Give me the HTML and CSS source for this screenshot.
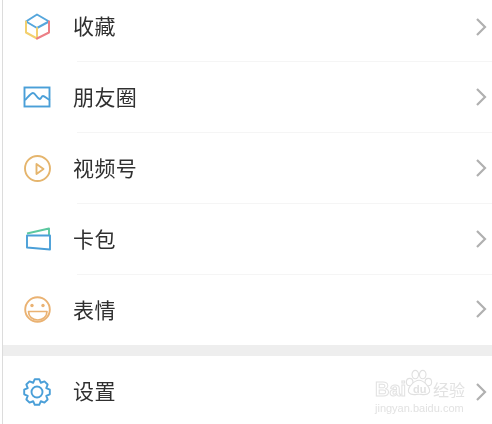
FILE: index.html
```html
<!DOCTYPE html>
<html lang="zh">
<head>
<meta charset="utf-8">
<title>发现</title>
<link rel="stylesheet" href="styles.css">
</head>
<body>
<main class="page">
  <section class="group">
    <div class="row row-first">
      <svg class="icon" viewBox="0 0 28 28" fill="none" stroke-width="2" stroke-linejoin="round" stroke-linecap="round">
        <path d="M14 1.500 26 8.500 14 15 3 8.500Z" stroke="#55a6dc"/>
        <path d="M3 8.500V19.500L14 25.500V15" stroke="#f3d06e"/>
        <path d="M26 8.500V19.500L14 25.500" stroke="#ec7f86"/>
      </svg>
      <span class="label">收藏</span>
      <svg class="chev" viewBox="0 0 12 20" fill="none"><path d="M2 2 10 10 2 18"/></svg>
    </div>
    <div class="row">
      <svg class="icon" viewBox="0 0 28 28" fill="none" stroke="#4a9fd8" stroke-width="1.900">
        <rect x="1.500" y="4.500" width="25" height="19"/>
        <path d="M2 17C5 14 8 10 10 10 12.500 10 14 16 17 16 18 16 18.500 13 20 13 22 13 24 16 27 17"/>
      </svg>
      <span class="label">朋友圈</span>
      <svg class="chev" viewBox="0 0 12 20" fill="none"><path d="M2 2 10 10 2 18"/></svg>
    </div>
    <div class="row">
      <svg class="icon" viewBox="0 0 28 28" fill="none" stroke="#e5b56d" stroke-width="1.900" stroke-linejoin="round">
        <circle cx="14.500" cy="14.500" r="12.500"/>
        <path d="M13.500 10 20.500 15 13.500 20Z"/>
      </svg>
      <span class="label">视频号</span>
      <svg class="chev" viewBox="0 0 12 20" fill="none"><path d="M2 2 10 10 2 18"/></svg>
    </div>
    <div class="row">
      <svg class="icon" viewBox="0 0 28 28" fill="none" stroke-width="1.900" stroke-linejoin="round">
        <path d="M4 8.500 26 3.500V10.500" stroke="#5cc8a0"/>
        <path d="M4 10.500H27V24.500L4 22.500Z" stroke="#4a9fd8"/>
      </svg>
      <span class="label">卡包</span>
      <svg class="chev" viewBox="0 0 12 20" fill="none"><path d="M2 2 10 10 2 18"/></svg>
    </div>
    <div class="row row-last">
      <svg class="icon" viewBox="0 0 28 28" fill="none" stroke="#eab272" stroke-width="1.900" stroke-linejoin="round">
        <circle cx="14.500" cy="14.500" r="12.300"/>
        <path d="M5.500 16.500H24C24 21.500 20 25 14.800 25 9.500 25 5.500 21.500 5.500 16.500Z" stroke-width="1.700"/>
        <circle class="eye" cx="9" cy="10.500" r="1.700"/>
        <circle class="eye" cx="20" cy="10.500" r="1.700"/>
      </svg>
      <span class="label">表情</span>
      <svg class="chev" viewBox="0 0 12 20" fill="none"><path d="M2 2 10 10 2 18"/></svg>
    </div>
  </section>
  <div class="gap"></div>
  <section class="group">
    <div class="row row-settings">
      <svg class="icon" viewBox="0 0 28 28" fill="none" stroke="#4a9fd8" stroke-width="1.900" stroke-linejoin="round">
        <path d="M11.740 1.200H16.260L17.830 4.760 21.460 3.350 24.650 6.540 23.240 10.170 26.800 11.740V16.260L23.240 17.830 24.650 21.460 21.460 24.650 17.830 23.240 16.260 26.800H11.740L10.170 23.240 6.540 24.650 3.350 21.460 4.760 17.830 1.200 16.260V11.740L4.760 10.170 3.350 6.540 6.540 3.350 10.170 4.760Z"/>
        <circle cx="14" cy="14" r="5.500"/>
      </svg>
      <span class="label">设置</span>
      <svg class="chev" viewBox="0 0 12 20" fill="none"><path d="M2 2 10 10 2 18"/></svg>
    </div>
  </section>
  <div class="mark">
    <div class="mark-top">
      <span class="mark-bai">Bai</span>
      <span class="mark-pawbox">
        <svg class="mark-paw" viewBox="0 0 30 30" fill="#fff" stroke="#e0e0e0" stroke-width="1.200">
          <ellipse cx="5" cy="14" rx="3.500" ry="4"/>
          <ellipse cx="11" cy="6" rx="3.500" ry="4.500"/>
          <ellipse cx="19" cy="6" rx="3.500" ry="4.500"/>
          <ellipse cx="25" cy="14" rx="3.500" ry="4"/>
          <path d="M15 12C20 12 28 20 26 25 24 29 18 27 15 27 12 27 6 29 4 25 2 20 10 12 15 12Z"/>
        </svg>
        <span class="mark-du">du</span>
      </span>
      <span class="mark-cn">经验</span>
    </div>
    <div class="mark-url">jingyan.baidu.com</div>
  </div>
</main>
</body>
</html>
```
FILE: styles.css
```css
* { box-sizing: border-box; }
html, body { margin: 0; padding: 0; background: #fff; }
.page {
  position: relative;
  width: 490px;
  height: 424px;
  margin-left: 2px;
  overflow: hidden;
  background: #fff;
  border-left: 1px solid #dcdcdc;
  font-family: "Noto Sans CJK SC", "Noto Sans", sans-serif;
}
.group { display: flex; flex-direction: column; }
.row {
  position: relative;
  display: flex;
  align-items: center;
  height: 71px;
  padding: 0 5px 2px 20px;
}
.row::after {
  content: "";
  position: absolute;
  left: 74px;
  right: 0;
  bottom: 0;
  height: 1px;
  background: #f5f5f5;
}
.row-first { height: 62px; padding-bottom: 8px; }
.row-last { height: 70px; }
.row-last::after, .row-settings::after { display: none; }
.row-settings { height: 68px; padding-top: 4px; padding-bottom: 0; }
.icon { width: 28px; height: 28px; flex: none; filter: blur(0.4px); }
.eye { fill: #eab272; stroke: none; }
.label {
  margin-left: 22px;
  flex: 1;
  padding-bottom: 2px;
  font-size: 21px;
  letter-spacing: 0.4px;
  line-height: 30px;
  color: #303030;
  filter: blur(0.35px);
}
.row-first .label, .row-settings .label { padding-bottom: 4px; }
.row-last .label { padding-bottom: 0; }
.chev { width: 12px; height: 20px; flex: none; filter: blur(0.5px); }
.chev path { stroke: #b0b0b0; stroke-width: 2.200; }
.gap { height: 11px; background: #eeeeee; }
.mark {
  position: absolute;
  left: 372px;
  top: 369px;
  width: 92px;
  color: #e2e2e2;
  filter: blur(0.4px);
}
.mark-top { display: flex; align-items: flex-end; height: 30px; }
.mark-bai {
  flex: none;
  width: 30px;
  font-family: "Liberation Sans", sans-serif;
  font-size: 20px;
  font-weight: 700;
  line-height: 20px;
  color: #fff;
  -webkit-text-stroke: 1px #e2e2e2;
}
.mark-pawbox { position: relative; flex: none; width: 28px; height: 30px; }
.mark-paw { display: block; width: 28px; height: 28px; }
.mark-du {
  position: absolute;
  left: 8px;
  bottom: 4px;
  font-family: "Liberation Sans", sans-serif;
  font-size: 11px;
  font-weight: 700;
  line-height: 12px;
  color: #e2e2e2;
}
.mark-cn { flex: none; font-size: 16px; line-height: 20px; white-space: nowrap; }
.mark-url {
  margin-top: 3px;
  font-family: "Liberation Sans", sans-serif;
  font-size: 11px;
  line-height: 12px;
  white-space: nowrap;
}
```
